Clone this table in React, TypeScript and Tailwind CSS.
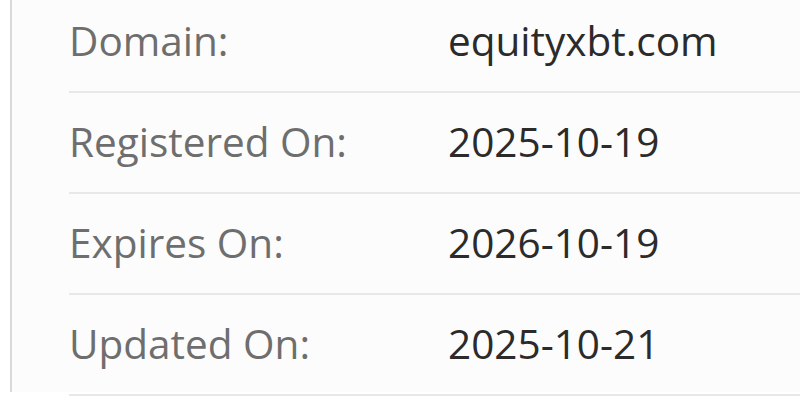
const rows = [
  { label: "Domain:", value: "equityxbt.com" },
  { label: "Registered On:", value: "2025-10-19" },
  { label: "Expires On:", value: "2026-10-19" },
  { label: "Updated On:", value: "2025-10-21" },
];

export default function App() {
  return (
    <div className="h-[400px] w-full overflow-hidden bg-white pl-[10px]" style={{ fontFamily: '"Open Sans", "Noto Sans", sans-serif' }}>
      <div className="h-[400px] border-l-2 border-[#d9d9d9] bg-[#fcfcfc] pl-[57px]">
        <div className="-mt-[8px]">
          {rows.map((row) => (
            <div key={row.label} className="flex h-[101px] items-center border-b-2 border-[#e8e8e8] text-[40.5px] leading-none">
              <div className="w-[379px] shrink-0 text-[#6e6e6e]">{row.label}</div>
              <div className="text-[#2b2b2b]">{row.value}</div>
            </div>
          ))}
        </div>
      </div>
    </div>
  );
}
